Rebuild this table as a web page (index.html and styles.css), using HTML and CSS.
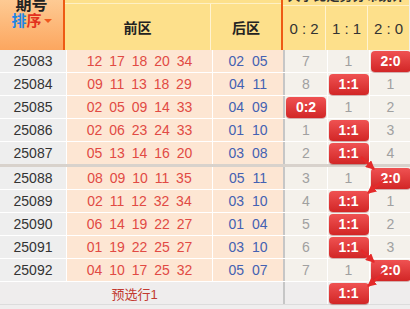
FILE: index.html
```html
<!DOCTYPE html>
<html lang="zh">
<head>
<meta charset="utf-8">
<title>走势</title>
<link rel="stylesheet" href="styles.css">
</head>
<body>
<div class="page">
  <div class="table">
    <div class="head">
      <div class="h-period">
        <div class="h-title">期号</div>
        <div class="h-sort"><span class="blue">排</span><span class="red">序</span><span class="tri"></span></div>
      </div>
      <div class="h-zones">
        <div class="h-top"></div>
        <div class="h-row">
          <div class="h-front">前区</div>
          <div class="h-back">后区</div>
        </div>
      </div>
      <div class="h-stats">
        <div class="h-top2">大小比走势分布统计</div>
        <div class="h-row">
          <div class="h-s s1">0 : 2</div>
          <div class="h-s">1 : 1</div>
          <div class="h-s">2 : 0</div>
        </div>
      </div>
    </div>

    <div class="row">
      <div class="c-period">25083</div><div class="c-front">12 17 18 20 34</div><div class="c-back">02 05</div>
      <div class="c-s s1">7</div><div class="c-s">1</div><div class="c-s"><span class="badge">2:0</span></div>
    </div>
    <div class="row">
      <div class="c-period">25084</div><div class="c-front">09 11 13 18 29</div><div class="c-back">04 11</div>
      <div class="c-s s1">8</div><div class="c-s"><span class="badge">1:1</span></div><div class="c-s">1</div>
    </div>
    <div class="row">
      <div class="c-period">25085</div><div class="c-front">02 05 09 14 33</div><div class="c-back">04 09</div>
      <div class="c-s s1"><span class="badge">0:2</span></div><div class="c-s">1</div><div class="c-s">2</div>
    </div>
    <div class="row">
      <div class="c-period">25086</div><div class="c-front">02 06 23 24 33</div><div class="c-back">01 10</div>
      <div class="c-s s1">1</div><div class="c-s"><span class="badge">1:1</span></div><div class="c-s">3</div>
    </div>
    <div class="row sep">
      <div class="c-period">25087</div><div class="c-front">05 13 14 16 20</div><div class="c-back">03 08</div>
      <div class="c-s s1">2</div><div class="c-s"><span class="badge">1:1</span></div><div class="c-s">4</div>
    </div>
    <div class="row">
      <div class="c-period">25088</div><div class="c-front">08 09 10 11 35</div><div class="c-back">05 11</div>
      <div class="c-s s1">3</div><div class="c-s">1</div><div class="c-s"><span class="badge">2:0</span></div>
    </div>
    <div class="row">
      <div class="c-period">25089</div><div class="c-front">02 11 12 32 34</div><div class="c-back">03 10</div>
      <div class="c-s s1">4</div><div class="c-s"><span class="badge">1:1</span></div><div class="c-s">1</div>
    </div>
    <div class="row">
      <div class="c-period">25090</div><div class="c-front">06 14 19 22 27</div><div class="c-back">01 04</div>
      <div class="c-s s1">5</div><div class="c-s"><span class="badge">1:1</span></div><div class="c-s">2</div>
    </div>
    <div class="row">
      <div class="c-period">25091</div><div class="c-front">01 19 22 25 27</div><div class="c-back">03 10</div>
      <div class="c-s s1">6</div><div class="c-s"><span class="badge">1:1</span></div><div class="c-s">3</div>
    </div>
    <div class="row">
      <div class="c-period">25092</div><div class="c-front">04 10 17 25 32</div><div class="c-back">05 07</div>
      <div class="c-s s1">7</div><div class="c-s">1</div><div class="c-s"><span class="badge">2:0</span></div>
    </div>
    <div class="row foot">
      <div class="c-foot">预选行1</div>
      <div class="c-s s1"></div><div class="c-s"><span class="badge">1:1</span></div><div class="c-s"></div>
    </div>
  </div>

  <svg class="arrows" width="410" height="309" viewBox="0 0 410 309">
    <defs>
      <marker id="ah" markerUnits="userSpaceOnUse" markerWidth="9" markerHeight="9" refX="8" refY="4.5" orient="auto">
        <path d="M0,0 L9,4.5 L0,9 z" fill="#e42a2a"/>
      </marker>
    </defs>
    <g stroke="#e42a2a" stroke-width="2.4" fill="none" marker-end="url(#ah)">
      <line x1="361" y1="157" x2="374" y2="169"/>
      <line x1="384" y1="180" x2="368" y2="193"/>
      <line x1="361" y1="250" x2="374" y2="262"/>
      <line x1="384" y1="273" x2="368" y2="286"/>
    </g>
  </svg>
</div>
</body>
</html>
```
FILE: styles.css
```css
html, body {
  margin: 0;
  padding: 0;
}
body {
  width: 410px;
  height: 309px;
  overflow: hidden;
  background: #efeeee;
  font-family: "Liberation Sans", Arial, "Noto Sans CJK SC", sans-serif;
}
.page {
  position: relative;
  width: 410px;
  height: 309px;
  overflow: hidden;
}
.table {
  margin-top: -12px;
  width: 411px;
}
.head {
  display: flex;
  height: 62px;
}
.h-period {
  width: 65px;
  border-right: 2px solid #ee5a14;
  background: linear-gradient(to bottom, #fed3a0, #fca65f);
  display: flex;
  flex-direction: column;
  align-items: center;
  padding-top: 9px;
  box-sizing: border-box;
  height: 62px;
}
.h-title {
  font-weight: bold;
  font-size: 16px;
  line-height: 16px;
  color: #222;
}
.h-sort {
  font-weight: bold;
  font-size: 15px;
  line-height: 16px;
  display: flex;
  align-items: center;
}
.blue { color: #1d86e6; }
.red { color: #e2321e; }
.tri {
  width: 0;
  height: 0;
  margin-left: 2px;
  border-left: 4px solid transparent;
  border-right: 4px solid transparent;
  border-top: 4px solid #f0581e;
}
.h-zones {
  width: 216px;
  display: flex;
  flex-direction: column;
  background: #fde08b;
}
.h-top {
  height: 15px;
  border-bottom: 1px solid #fef0c4;
}
.h-row {
  display: flex;
  flex: 1;
}
.h-front {
  width: 145px;
  border-right: 1px solid #fff3d0;
  display: flex;
  align-items: center;
  justify-content: center;
  font-weight: bold;
  font-size: 14px;
  color: #222;
}
.h-back {
  width: 70px;
  display: flex;
  align-items: center;
  justify-content: center;
  font-weight: bold;
  font-size: 14px;
  color: #222;
}
.h-stats {
  width: 128px;
  display: flex;
  flex-direction: column;
  background: #fde08b;
  border-left: 2px solid #ee5a14;
  box-sizing: border-box;
}
.h-top2 {
  height: 17px;
  border-bottom: 1px solid #fef0c4;
  font-weight: bold;
  font-size: 13px;
  line-height: 15px;
  text-align: center;
  color: #333;
  white-space: nowrap;
  overflow: hidden;
}
.h-s {
  width: 41px;
  border-left: 1px solid #fff3d0;
  display: flex;
  align-items: center;
  justify-content: center;
  font-size: 15px;
  color: #333;
}
.h-s.s1 {
  width: 42px;
  border-left: none;
}
.row {
  display: flex;
  height: 22px;
  border-bottom: 1px solid #ffffff;
}
.row.sep {
  border-bottom: 3px solid #d8d2cc;
}
.c-period {
  width: 66px;
  border-right: 1px solid #ffffff;
  background: #eeeeee;
  color: #333;
  font-size: 14px;
  display: flex;
  align-items: center;
  justify-content: center;
}
.c-front {
  width: 145px;
  border-right: 1px solid #ffffff;
  background: #fde6d3;
  color: #e14a44;
  font-size: 14px;
  word-spacing: 3px;
  display: flex;
  align-items: center;
  justify-content: center;
  white-space: pre;
}
.c-back {
  width: 70px;
  background: #fde6d3;
  color: #4461b2;
  font-size: 14px;
  word-spacing: 4px;
  display: flex;
  align-items: center;
  justify-content: center;
  white-space: pre;
}
.c-s {
  width: 41px;
  border-left: 1px solid #ffffff;
  background: #f4f1eb;
  color: #a0a0a0;
  font-size: 14px;
  display: flex;
  align-items: center;
  justify-content: center;
}
.c-s.s1 {
  width: 42px;
  border-left: 2px solid #c6c6c6;
}
.row.foot {
  border-bottom: 1px solid #dcdcdc;
}
.c-foot {
  width: 283px;
  box-sizing: border-box;
  padding-right: 14px;
  background: #efeded;
  color: #c23a30;
  font-size: 13px;
  display: flex;
  align-items: center;
  justify-content: center;
}
.foot .c-s {
  background: #efeded;
}
.badge {
  display: block;
  width: 40px;
  height: 21px;
  border-radius: 4px;
  background: linear-gradient(to bottom, #ef5252, #d22626);
  box-shadow: 0 1px 1px rgba(120, 0, 0, 0.35);
  color: #fff;
  font-weight: bold;
  font-size: 14px;
  line-height: 21px;
  text-align: center;
}
.arrows {
  position: absolute;
  left: 0;
  top: 0;
  pointer-events: none;
}
```
